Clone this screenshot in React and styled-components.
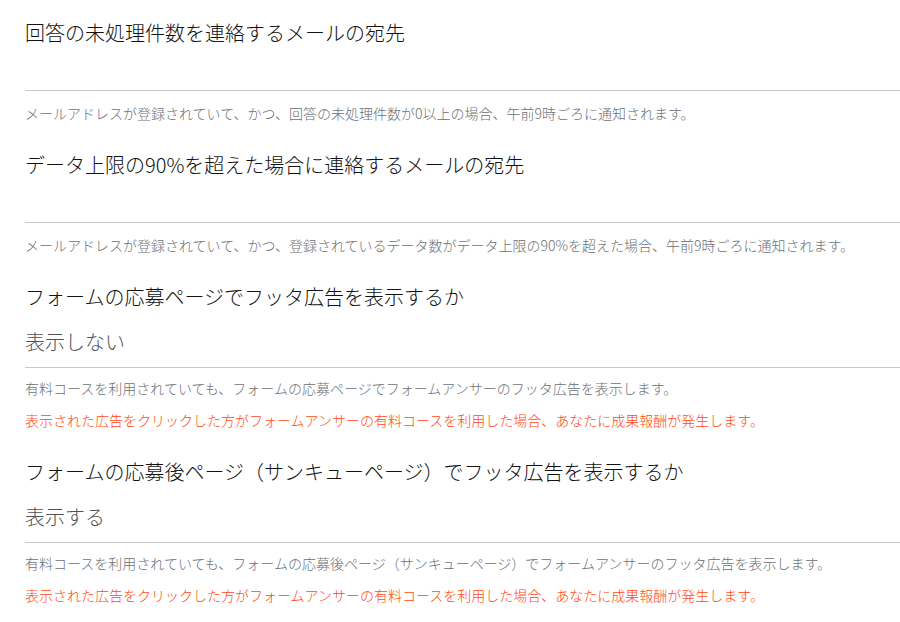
import React from 'react';
import styled, { createGlobalStyle } from 'styled-components';

const GlobalStyle = createGlobalStyle`
    body {
        margin: 0;
        background: #fff;
        font-family: "Noto Sans CJK JP", "Noto Sans", sans-serif;
        font-weight: 300;
    }
`;

const Container = styled.div`
    width: 100%;
    padding: 18px 0 0 25px;
    box-sizing: border-box;
    display: flex;
    flex-direction: column;
`;

const Field = styled.div`
    display: flex;
    flex-direction: column;
    margin-top: ${(p) => (p.$first ? '0' : '27px')};
`;

const Label = styled.div`
    font-size: 20px;
    line-height: 30px;
    color: #111;
`;

const InputBox = styled.div`
    height: ${(p) => (p.$select ? '50px' : '42px')};
    padding-top: ${(p) => (p.$select ? '5px' : '0')};
    line-height: 50px;
    font-size: 20px;
    color: #4f5357;
    border-bottom: 1px solid #c8c8c8;
`;

const Hint = styled.div`
    font-size: 14px;
    line-height: 20px;
    color: #6c7075;
    margin-top: ${(p) => p.$top}px;
    white-space: nowrap;
`;

const Warning = styled(Hint)`
    color: #ff4a10;
`;

const warn = '表示された広告をクリックした方がフォームアンサーの有料コースを利用した場合、あなたに成果報酬が発生します。';

const fields = [
    {
        label: '回答の未処理件数を連絡するメールの宛先',
        hint: 'メールアドレスが登録されていて、かつ、回答の未処理件数が0以上の場合、午前9時ごろに通知されます。',
    },
    {
        label: 'データ上限の90%を超えた場合に連絡するメールの宛先',
        hint: 'メールアドレスが登録されていて、かつ、登録されているデータ数がデータ上限の90%を超えた場合、午前9時ごろに通知されます。',
    },
    {
        label: 'フォームの応募ページでフッタ広告を表示するか',
        value: '表示しない',
        hint: '有料コースを利用されていても、フォームの応募ページでフォームアンサーのフッタ広告を表示します。',
        warning: warn,
    },
    {
        label: 'フォームの応募後ページ（サンキューページ）でフッタ広告を表示するか',
        value: '表示する',
        hint: '有料コースを利用されていても、フォームの応募後ページ（サンキューページ）でフォームアンサーのフッタ広告を表示します。',
        warning: warn,
    },
];

const App = () => {
    return (
        <>
            <GlobalStyle />
            <Container>
                {fields.map((f, i) => (
                    <Field key={i} $first={i === 0}>
                        <Label>{f.label}</Label>
                        <InputBox $select={!!f.value}>{f.value}</InputBox>
                        <Hint $top={f.value ? 10 : 12}>{f.hint}</Hint>
                        {f.warning && <Warning $top={12}>{f.warning}</Warning>}
                    </Field>
                ))}
            </Container>
        </>
    );
};

export default App;
